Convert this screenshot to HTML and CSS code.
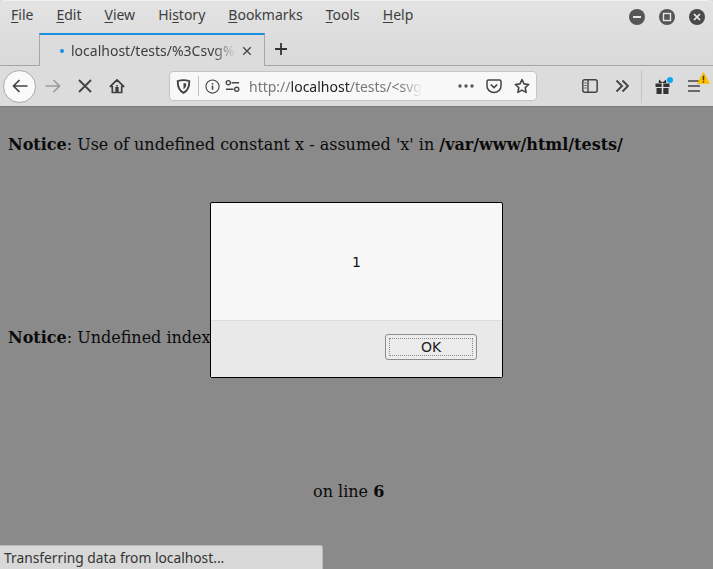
FILE: index.html
```html
<!DOCTYPE html>
<html lang="en">
<head>
<meta charset="utf-8">
<title>localhost/tests</title>
<link rel="stylesheet" href="styles.css">
</head>
<body>
<div class="chrome">
  <div class="menubar">
    <nav class="menus">
      <span><u>F</u>ile</span><span><u>E</u>dit</span><span><u>V</u>iew</span><span>Hi<u>s</u>tory</span><span><u>B</u>ookmarks</span><span><u>T</u>ools</span><span><u>H</u>elp</span>
    </nav>
    <div class="winbtns">
      <svg class="win" viewBox="0 0 16 16"><circle cx="8" cy="8" r="8" fill="#565656"/><rect x="4" y="7" width="8" height="2" fill="#e6e6e6"/></svg>
      <svg class="win" viewBox="0 0 16 16"><circle cx="8" cy="8" r="8" fill="#565656"/><rect x="4.5" y="4.5" width="7" height="7" fill="none" stroke="#e6e6e6" stroke-width="1.4"/></svg>
      <svg class="win" viewBox="0 0 16 16"><circle cx="8" cy="8" r="8" fill="#4a4a4a"/><path d="M5 5l6 6M11 5l-6 6" stroke="#eee" stroke-width="1.7"/></svg>
    </div>
  </div>
  <div class="tabbar">
    <div class="tab">
      <span class="dot"></span>
      <span class="tabtitle">localhost/tests/%3Csvg%</span>
      <svg class="tabx" viewBox="0 0 12 12"><path d="M1.500 1.500l9 9M10.500 1.500l-9 9" stroke="#444" stroke-width="1.600" fill="none"/></svg>
    </div>
    <svg class="newtab" viewBox="0 0 14 14"><path d="M7 1v12M1 7h12" stroke="#333" stroke-width="1.800"/></svg>
  </div>
  <div class="navbar">
    <div class="backbtn">
      <svg class="ico16" viewBox="0 0 16 16"><path d="M15.500 8H1.500M7.500 2L1.500 8l6 6" fill="none" stroke="#444" stroke-width="1.700"/></svg>
    </div>
    <svg class="ico16 fwd" viewBox="0 0 16 16"><path d="M.5 8h14M8.500 2l6 6-6 6" fill="none" stroke="#9b9b9b" stroke-width="1.700"/></svg>
    <svg class="stop" viewBox="0 0 14 14"><path d="M1 1l12 12M13 1L1 13" fill="none" stroke="#444" stroke-width="1.900"/></svg>
    <svg class="ico16 home" viewBox="0 0 16 16"><path d="M8 1.800L1.300 8.300h2V14.500h9.400V8.300h2z" fill="none" stroke="#3f3f3f" stroke-width="1.700" stroke-linejoin="round"/><path d="M6.300 9h3.400v5.500H6.300z" fill="#3f3f3f"/><rect x="7.200" y="7" width="1.600" height="1.600" fill="#3f3f3f"/></svg>
    <div class="urlbar">
      <svg class="shield" viewBox="0 0 16 16"><path d="M8 1.200c2.200 0 4.300.4 6.200 1.100 0 6-1.800 10.200-6.200 12.500C3.600 12.500 1.800 8.300 1.800 2.300 3.700 1.600 5.800 1.200 8 1.200z" fill="none" stroke="#444" stroke-width="2"/><path d="M8 4.200c1 0 2 .2 3 .5 0 3-.9 5-3 6.300z" fill="#444"/></svg>
      <span class="urlsep"></span>
      <svg class="info" viewBox="0 0 16 16"><circle cx="8" cy="8" r="7" fill="none" stroke="#444" stroke-width="1.200"/><rect x="7.200" y="7" width="1.600" height="4.500" fill="#444"/><rect x="7.200" y="4.300" width="1.600" height="1.600" fill="#444"/></svg>
      <svg class="perm" viewBox="0 0 16 16"><circle cx="3.500" cy="4" r="2.200" fill="none" stroke="#444" stroke-width="1.400"/><path d="M7 4h8M1 11h8" stroke="#444" stroke-width="1.600"/><circle cx="12.500" cy="11" r="2.200" fill="none" stroke="#444" stroke-width="1.400"/></svg>
      <span class="url"><span class="dim">http://</span>localhost<span class="dim">/tests/&lt;svg</span></span>
      <svg class="dots" viewBox="0 0 16 4"><circle cx="2" cy="2" r="1.700" fill="#555"/><circle cx="8" cy="2" r="1.700" fill="#555"/><circle cx="14" cy="2" r="1.700" fill="#555"/></svg>
      <svg class="ico16 pocket" viewBox="0 0 16 16"><path d="M1 3.500C1 2.600 1.600 2 2.500 2h11c.9 0 1.500.6 1.500 1.500V8c0 3.800-3.200 6.500-7 6.500S1 11.800 1 8z" fill="none" stroke="#444" stroke-width="1.500"/><path d="M4.800 6.500L8 9.500l3.200-3" fill="none" stroke="#444" stroke-width="1.700"/></svg>
      <svg class="ico16 star" viewBox="0 0 16 16"><path d="M8 1.500l2 4.400 4.700.6-3.500 3.200.9 4.700L8 12.100l-4.100 2.300.9-4.700L1.300 6.500 6 5.900z" fill="none" stroke="#444" stroke-width="1.600" stroke-linejoin="round"/></svg>
    </div>
    <svg class="ico16 sidebar" viewBox="0 0 16 16"><rect x=".8" y="1.800" width="14.400" height="12.400" rx="2" fill="none" stroke="#444" stroke-width="1.500"/><path d="M6 2v12" stroke="#444" stroke-width="1.400"/><path d="M2.500 5h2M2.500 7.500h2M2.500 10h2" stroke="#444" stroke-width="1"/></svg>
    <svg class="more" viewBox="0 0 14 14"><path d="M1.500 1.500L7 7l-5.500 5.500M7.500 1.500L13 7l-5.500 5.500" fill="none" stroke="#444" stroke-width="1.900"/></svg>
    <span class="navsep"></span>
    <div class="gift">
      <svg class="giftico" viewBox="0 0 15 15"><path d="M.5 4.500h6.200v3.500H.5zM8.300 4.500h6.200v3.500H8.300zM1.500 9h5.200v6H1.500zM8.300 9h5.200v6H8.300z" fill="#333"/><path d="M4 .5L7.500 3.500 11 .5 11.300 4H3.700z" fill="#333"/></svg>
      <span class="giftdot"></span>
    </div>
    <div class="burger">
      <svg class="burgerico" viewBox="0 0 12 12"><path d="M0 1h12M0 6h12M0 11h12" stroke="#444" stroke-width="1.500"/></svg>
      <svg class="warn" viewBox="0 0 14 13"><path d="M7 .3L13.900 12.700H.1z" fill="#ffbf00" stroke="#ffbf00" stroke-width=".5" stroke-linejoin="round"/><rect x="6.200" y="4" width="1.600" height="5" fill="#4a3a00"/><rect x="6.200" y="10" width="1.600" height="1.500" fill="#4a3a00"/></svg>
    </div>
  </div>
</div>
<main class="page">
  <p class="line first"><b>Notice</b>: Use of undefined constant x - assumed 'x' in <b>/var/www/html/tests/</b></p>
  <p class="line second"><b>Notice</b>: Undefined index</p>
  <p class="line third">on line <b>6</b></p>
  <div class="status">Transferring data from localhost...</div>
  <div class="dialog">
    <div class="dlgbody">1</div>
    <div class="dlgfoot"><button class="ok"><span>OK</span></button></div>
  </div>
</main>
</body>
</html>
```
FILE: styles.css
```css
* { box-sizing: border-box; }
html, body { margin: 0; height: 100%; overflow: hidden; }
body { width: 713px; height: 569px; display: flex; flex-direction: column; font-family: "Noto Sans", sans-serif; background: #8a8a8a; }
svg { display: block; flex: none; }
.chrome { flex: none; height: 107px; background: #dcdcdc; display: flex; flex-direction: column; border-bottom: 1px solid #7a7a7a; }
.menubar { height: 33px; display: flex; justify-content: space-between; padding: 0 8px 0 11px; background: linear-gradient(#e3e3e3, #dedede); border-top: 1px solid #f0f0f0; border-radius: 5px 5px 0 0; }
.menus { display: flex; gap: 23px; font-size: 14px; color: #3d3d3d; padding-top: 4px; line-height: 20px; }
.menus u { text-underline-offset: 2px; }
.winbtns { display: flex; gap: 14px; padding-top: 8px; }
.win { width: 16px; height: 16px; }
.tabbar { height: 33px; display: flex; align-items: center; padding-left: 39px; background: linear-gradient(#dedede, #d9d9d9); border-bottom: 1px solid #a6a6a6; }
.tab { width: 226px; height: 33px; margin-bottom: -1px; background: #dcdcdc; border-top: 2px solid #1a8fdc; border-left: 1px solid #a6a6a6; border-right: 1px solid #a6a6a6; display: flex; align-items: center; padding-left: 20px; font-size: 14px; color: #3d3d3d; }
.dot { width: 4px; height: 4px; border-radius: 50%; background: #1a8fe3; flex: none; margin-right: 7px; }
.tabtitle { flex: none; width: 165px; overflow: hidden; white-space: nowrap; -webkit-mask-image: linear-gradient(90deg, #000 86%, transparent); mask-image: linear-gradient(90deg, #000 86%, transparent); }
.tabx { width: 10px; height: 10px; margin-left: 6px; }
.newtab { width: 14px; height: 14px; margin-left: 9px; }
.navbar { flex: 1; display: flex; align-items: center; padding: 0 10px 0 3px; }
.ico16 { width: 16px; height: 16px; }
.backbtn { width: 33px; height: 33px; border-radius: 50%; background: #fafafa; border: 1px solid #a9a9a9; display: flex; align-items: center; justify-content: center; flex: none; }
.fwd { margin-left: 9px; }
.stop { width: 14px; height: 14px; margin-left: 17px; }
.home { margin-left: 17px; }
.urlbar { width: 368px; height: 30px; margin-left: 44px; background: #f8f8f8; border: 1px solid #c4c4c4; border-radius: 4px; display: flex; align-items: center; flex: none; padding-left: 6px; }
.shield { width: 15px; height: 15px; }
.urlsep { width: 1px; height: 20px; background: #c2c2c2; margin: 0 6px 0 7px; flex: none; }
.info { width: 15px; height: 15px; }
.perm { width: 15px; height: 15px; margin-left: 5px; }
.url { width: 173px; margin-left: 9px; font-size: 14px; white-space: nowrap; overflow: hidden; color: #222; -webkit-mask-image: linear-gradient(90deg, #000 88%, transparent); mask-image: linear-gradient(90deg, #000 88%, transparent); }
.dim { color: #777; }
.dots { width: 16px; height: 4px; margin-left: 36px; }
.pocket { margin-left: 12px; }
.star { margin-left: 12px; }
.sidebar { margin-left: 45px; }
.more { width: 14px; height: 14px; margin-left: 17px; }
.navsep { width: 1px; height: 33px; background: #c4c4c4; margin-left: 12px; flex: none; }
.gift { position: relative; margin-left: 13px; }
.giftico { width: 15px; height: 15px; }
.giftdot { position: absolute; left: 12px; top: -2px; width: 6px; height: 6px; border-radius: 50%; background: #14a5f0; }
.burger { position: relative; margin-left: 18px; }
.burgerico { width: 12px; height: 12px; }
.warn { position: absolute; left: 9px; top: -8px; width: 13px; height: 12px; }
.page { flex: 1; position: relative; background: #8a8a8a; font-family: "DejaVu Serif", serif; font-size: 16px; color: #0a0a0a; padding: 28px 8px 0; }
.line { margin: 0; line-height: 19px; white-space: nowrap; }
.second { margin-top: 174px; }
.third { margin-top: 135px; padding-left: 305px; }
.status { position: absolute; left: 0; bottom: 0; width: 323px; height: 24px; background: #d8d8d8; border-top: 1px solid #bdbdbd; border-right: 1px solid #bdbdbd; border-top-right-radius: 3px; font-family: "Noto Sans", sans-serif; font-size: 13.800px; line-height: 23px; padding-left: 4px; color: #333; }
.dialog { position: absolute; left: 210px; top: 95px; width: 293px; height: 176px; border: 1px solid #000; border-radius: 2px; background: #f7f7f7; display: flex; flex-direction: column; font-family: "DejaVu Sans", sans-serif; font-size: 14px; color: #111; }
.dlgbody { flex: 1; display: flex; align-items: center; justify-content: center; }
.dlgfoot { height: 57px; flex: none; background: #e9e9e9; border-top: 1px solid #dddddd; display: flex; justify-content: flex-end; padding: 13px 25px 0 0; }
.ok { width: 92px; height: 26px; padding: 3px; background: #ececec; border: 1px solid #8e8e8e; border-radius: 3px; font: inherit; color: #222; }
.ok span { display: block; height: 18px; line-height: 16px; border: 1px dotted #8a8a8a; }
```
